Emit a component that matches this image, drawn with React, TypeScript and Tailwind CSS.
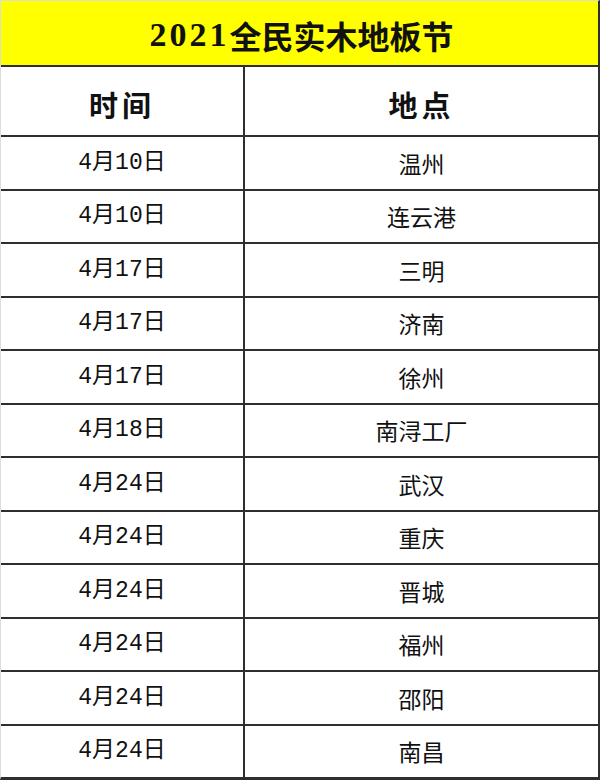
import React from "react";

const rows = [
  { date: "4月10日", place: "温州" },
  { date: "4月10日", place: "连云港" },
  { date: "4月17日", place: "三明" },
  { date: "4月17日", place: "济南" },
  { date: "4月17日", place: "徐州" },
  { date: "4月18日", place: "南浔工厂" },
  { date: "4月24日", place: "武汉" },
  { date: "4月24日", place: "重庆" },
  { date: "4月24日", place: "晋城" },
  { date: "4月24日", place: "福州" },
  { date: "4月24日", place: "邵阳" },
  { date: "4月24日", place: "南昌" },
];

const mono = "font-['Liberation_Mono','Noto_Sans_CJK_SC',monospace]";
const cjk = "font-['Noto_Sans_CJK_SC',sans-serif]";

export default function App() {
  return (
    <div className="w-[600px] h-[780px] bg-white flex flex-col border-t border-l border-[#dcdcdc] border-r-2 border-r-[#2e2e2e] border-b-[3px] border-b-[#2e2e2e] text-[#111]">
      {/* Title */}
      <div className="h-[66px] shrink-0 bg-[#ffff00] flex items-center justify-center border-b-2 border-[#2e2e2e] text-[32px] font-bold leading-none pt-1 pl-1">
        <span className="font-['Liberation_Serif',serif] tracking-[3px] text-[34px]">
          2021
        </span>
        <span className={cjk}>全民实木地板节</span>
      </div>

      {/* Column header */}
      <div className="h-[70px] shrink-0 grid grid-cols-[244px_1fr] border-b-2 border-[#2e2e2e]">
        <div
          className={`flex items-center justify-center border-r-2 border-[#2e2e2e] text-[29px] font-bold tracking-[4px] pt-2 ${cjk}`}
        >
          时间
        </div>
        <div
          className={`flex items-center justify-center text-[29px] font-bold tracking-[4px] pt-2 ${cjk}`}
        >
          地点
        </div>
      </div>

      {/* Rows */}
      {rows.map((row, i) => (
        <div
          key={i}
          className={`flex-1 grid grid-cols-[244px_1fr] ${
            i < rows.length - 1 ? "border-b-2 border-[#2e2e2e]" : ""
          }`}
        >
          <div
            className={`flex items-center justify-center border-r-2 border-[#2e2e2e] text-[23px] ${mono}`}
          >
            {row.date}
          </div>
          <div className={`flex items-center justify-center text-[23px] ${cjk}`}>
            {row.place}
          </div>
        </div>
      ))}
    </div>
  );
}
